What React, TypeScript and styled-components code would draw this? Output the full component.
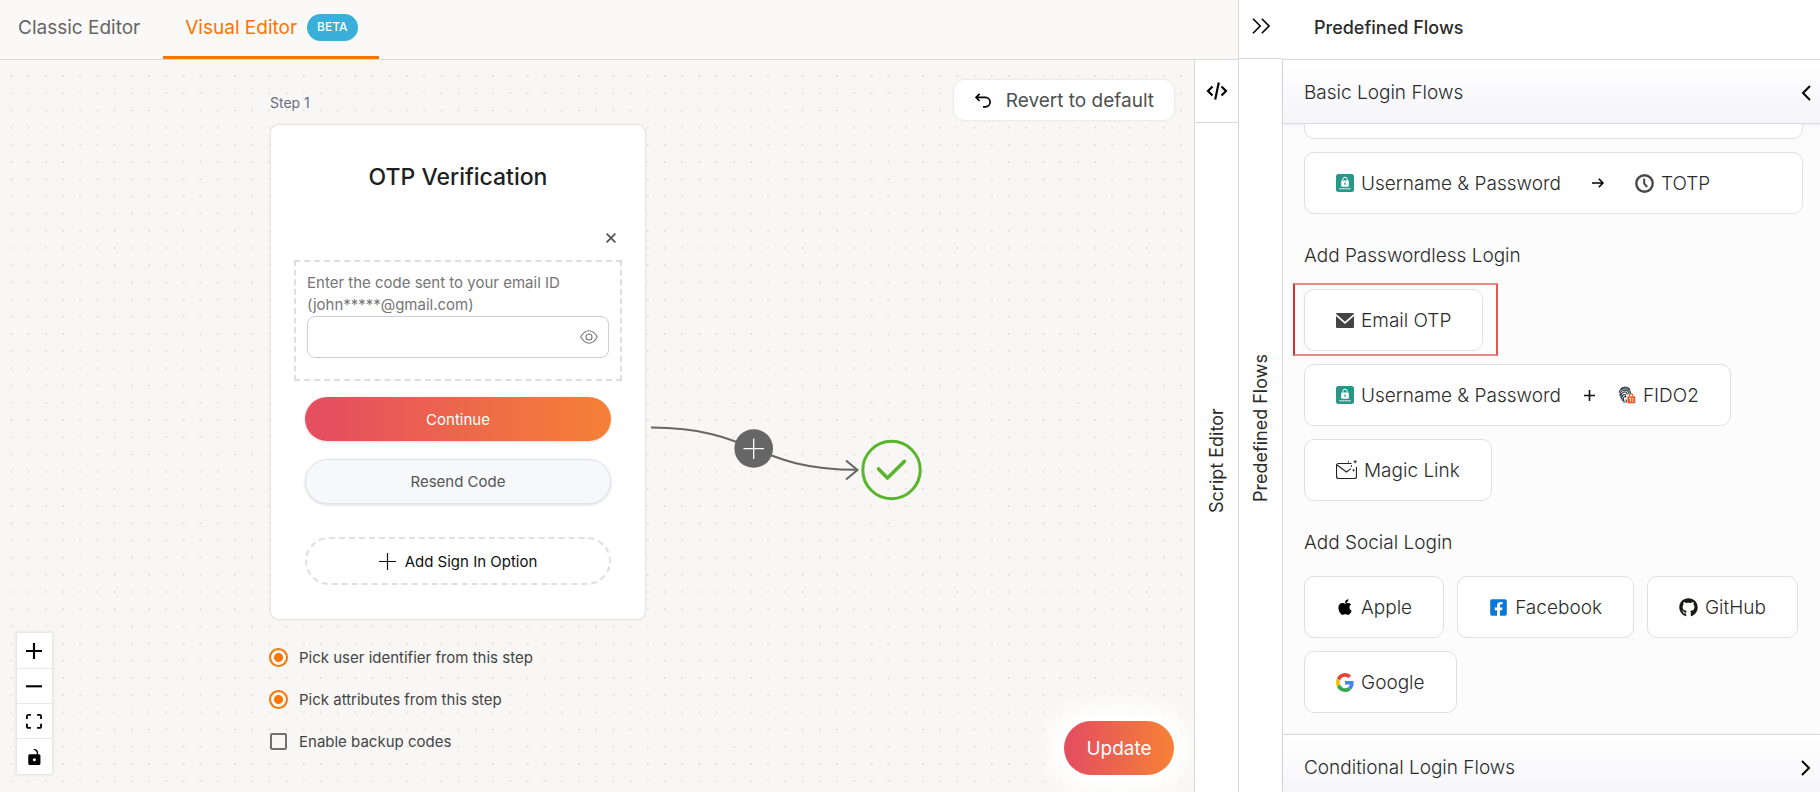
import React from "react";
import styled, { createGlobalStyle, css } from "styled-components";
import { FaApple, FaFacebookSquare, FaGithub } from "react-icons/fa";

const line = "#d9d9d9";
const orange = "#fa7400";
const brand = "linear-gradient(90deg, #e5505f 8%, #f57f37 96%)";

const GlobalStyle = createGlobalStyle`
  *, *::before, *::after { box-sizing: border-box; }
  body {
    margin: 0;
    font-family: Inter, "Liberation Sans", sans-serif;
    font-size: 19px;
    color: #2b2b2b;
    background: #fff;
  }
  button { font: inherit; color: inherit; cursor: pointer; }
  h1, h2, h3 { margin: 0; font-weight: 400; font-size: inherit; }
  svg { display: block; flex: none; }
`;

const Page = styled.div`
  display: grid;
  grid-template-columns: minmax(0, 1fr) 44px minmax(0, 538px);
  height: 100vh;
  min-height: 780px;
  overflow: hidden;
`;

const Editor = styled.main`
  display: flex;
  flex-direction: column;
  min-width: 0;
`;

const Tabs = styled.nav`
  display: flex;
  height: 60px;
  background: #faf9f7;
  border-bottom: 1px solid ${line};
`;

const Tab = styled.a<{ $active?: boolean }>`
  display: flex;
  align-items: center;
  gap: 10px;
  padding: 0 23px 2px 18px;
  font-weight: 400;
  text-decoration: none;
  color: #666;
  border-bottom: 3px solid transparent;
  ${(p) =>
    p.$active &&
    css`
      padding: 0 21px 2px 22px;
      color: ${orange};
      border-bottom-color: ${orange};
    `}
`;

const Badge = styled.span`
  padding: 0 10px 2px;
  border-radius: 14px;
  background: #3aafda;
  color: #fff;
  font-size: 12px;
  font-weight: 500;
  line-height: 25px;
`;

const Workspace = styled.div`
  display: flex;
  flex: 1;
  min-height: 0;
`;

const Canvas = styled.section`
  position: relative;
  flex: 1;
  min-width: 0;
  overflow: hidden;
  background: #f8f7f5;
`;

const Dots = styled.svg`
  position: absolute;
  inset: 0;
  width: 100%;
  height: 100%;
`;

const StepNode = styled.div`
  position: absolute;
  left: 270px;
  top: 31px;
  width: 376px;
`;

const StepName = styled.h2`
  font-size: 14px;
  line-height: 24px;
  color: #6c6c80;
  margin-bottom: 9px;
`;

const Card = styled.div`
  display: flex;
  flex-direction: column;
  height: 496px;
  padding: 36px 23px 34px;
  background: #fff;
  border: 1px solid #e4e4e4;
  border-radius: 9px;
  box-shadow: 0 0 2px #e8e8e8;
`;

const CardTitle = styled.h3`
  font-size: 23px;
  font-weight: 500;
  line-height: 32px;
  text-align: center;
  color: #1f1f1f;
`;

const Close = styled.button`
  align-self: flex-end;
  display: grid;
  place-items: center;
  width: 20px;
  height: 20px;
  margin: 35px 1px 12px 0;
  padding: 0;
  border: 0;
  background: none;
`;

const Field = styled.div`
  height: 122px;
  padding: 10px 11px;
  border: 2px dashed #dedede;
  font-size: 15px;
  line-height: 22px;
  color: #757575;
`;

const FieldLabel = styled.label`
  display: block;
`;

const InputBox = styled.div`
  display: flex;
  align-items: center;
  height: 42px;
  padding-right: 10px;
  border: 1px solid #cfcfcf;
  border-radius: 8px;
`;

const Input = styled.input`
  flex: 1;
  min-width: 0;
  height: 100%;
  padding: 0 12px;
  border: 0;
  outline: 0;
  background: none;
  font: inherit;
`;

const IconButton = styled.button`
  display: grid;
  place-items: center;
  padding: 0;
  border: 0;
  background: none;
`;

const Actions = styled.div`
  display: flex;
  flex-direction: column;
  gap: 18px;
  padding: 16px 11px 0;
`;

const Pill = styled.button<{ $kind: "primary" | "soft" | "dashed" }>`
  display: flex;
  align-items: center;
  justify-content: center;
  gap: 9px;
  height: 45px;
  border: 0;
  border-radius: 24px;
  font-size: 15px;
  box-shadow: 0 1px 3px rgba(0, 0, 0, 0.15);
  ${(p) =>
    p.$kind === "primary" &&
    css`
      height: 44px;
      background: ${brand};
      color: #fff;
    `}
  ${(p) =>
    p.$kind === "soft" &&
    css`
      background: #f6f8fc;
      border: 1px solid #e2e3e8;
      color: #555;
    `}
  ${(p) =>
    p.$kind === "dashed" &&
    css`
      height: 48px;
      margin-top: 15px;
      background: #fff;
      border: 2px dashed #e0e0e0;
      box-shadow: none;
      color: #111;
    `}
`;

const Options = styled.div`
  display: flex;
  flex-direction: column;
  gap: 18px;
  margin-top: 25px;
`;

const Option = styled.label`
  display: flex;
  align-items: center;
  gap: 11px;
  height: 24px;
  font-size: 15px;
  color: #444;
`;

const Radio = styled.input.attrs({ type: "radio" })`
  appearance: none;
  width: 19px;
  height: 19px;
  margin: 0 0 0 -1px;
  border: 2px solid ${orange};
  border-radius: 50%;
  background: radial-gradient(circle, ${orange} 4px, transparent 5px);
`;

const Check = styled.input.attrs({ type: "checkbox" })`
  appearance: none;
  width: 17px;
  height: 17px;
  margin: 0 1px 0 0;
  border: 2px solid #707070;
  border-radius: 2px;
`;

const Edge = styled.svg`
  position: absolute;
  left: 640px;
  top: 340px;
`;

const Controls = styled.div`
  position: absolute;
  left: 17px;
  bottom: 18px;
  width: 35px;
  box-shadow: 0 0 3px 1px rgba(0, 0, 0, 0.1);
`;

const Control = styled.button`
  display: grid;
  place-items: center;
  width: 35px;
  height: 35px;
  padding: 0 1px 0 0;
  border: 0;
  background: #fff;
  & + & {
    border-top: 1px solid #e8e8e8;
  }
  &:last-child {
    height: 36px;
  }
`;

const Revert = styled.button`
  position: absolute;
  top: 20px;
  right: 20px;
  display: flex;
  align-items: center;
  gap: 15px;
  height: 40px;
  padding: 0 20px 0 21px;
  border: 0;
  border-radius: 10px;
  background: #fff;
  color: #505050;
  box-shadow: 0 0 3px rgba(0, 0, 0, 0.12);
`;

const Update = styled.button`
  position: absolute;
  right: 20px;
  bottom: 17px;
  height: 54px;
  width: 110px;
  border: 0;
  border-radius: 27px;
  background: ${brand};
  color: #fff;
  box-shadow: 0 0 20px 16px #fff;
`;

const Rail = styled.aside`
  display: flex;
  flex-direction: column;
  flex: none;
  width: 44px;
  background: #fff;
  border-left: 1px solid ${line};
`;

const RailToggle = styled.button<{ $height: number; $lift?: number }>`
  display: grid;
  place-items: center;
  flex: none;
  height: ${(p) => p.$height}px;
  padding: 0 0 ${(p) => p.$lift ?? 0}px;
  border: 0;
  border-bottom: 1px solid ${line};
  background: none;
`;

const RailLabel = styled.span`
  flex: 1;
  display: flex;
  align-items: center;
  justify-content: center;
  padding-bottom: 6px;
  writing-mode: vertical-rl;
  transform: rotate(180deg);
  font-size: 18px;
`;

const Flows = styled.aside`
  display: flex;
  flex-direction: column;
  min-width: 0;
  min-height: 0;
`;

const FlowsTitle = styled.h2`
  flex: none;
  height: 59px;
  padding: 0 32px;
  font-size: 18px;
  line-height: 55px;
  font-weight: 500;
`;

const Accordion = styled.div`
  display: flex;
  flex-direction: column;
  flex: 1;
  min-height: 0;
  margin-bottom: -7px;
  border-left: 1px solid ${line};
  background: #fcfcfc;
`;

const SectionHeader = styled.button`
  display: flex;
  flex: none;
  align-items: center;
  justify-content: space-between;
  height: 65px;
  padding: 2px 9px 0 21px;
  border: 0;
  border-top: 1px solid ${line};
  border-bottom: 1px solid #dcdce6;
  background: linear-gradient(#fff, #f5f5f9);
  box-shadow: 0 1px 3px rgba(0, 0, 0, 0.08);
  font-weight: 300;
  text-align: left;
`;

const SectionBody = styled.div`
  display: flex;
  flex-direction: column;
  justify-content: flex-end;
  flex: 1;
  min-height: 0;
  overflow: hidden;
  padding: 0 17px 21px 21px;
`;

const GroupTitle = styled.h3`
  margin: 29px 0 21px;
  line-height: 25px;
  font-weight: 300;
`;

const Row = styled.div`
  display: flex;
  flex-wrap: wrap;
  gap: 13px;
`;

const Stack = styled.div`
  display: flex;
  flex-direction: column;
  align-items: flex-start;
  gap: 13px;
`;

const Flow = styled.button<{ $wide?: boolean; $marked?: boolean }>`
  position: relative;
  display: flex;
  flex: none;
  align-items: center;
  height: 62px;
  padding: 0 31px;
  border: 1px solid #e0e0e0;
  border-radius: 10px;
  background: #fff;
  font-weight: 300;
  ${(p) => p.$wide && "align-self: stretch;"}
  ${(p) =>
    p.$marked &&
    css`
      &::after {
        content: "";
        position: absolute;
        inset: -7px -16px -6px -12px;
        border: 2px solid #e58a84;
        border-left-color: #cf342b;
        border-right-color: #dc5a50;
      }
    `}
`;

const Method = styled.span`
  display: flex;
  align-items: center;
  gap: 7px;
  white-space: nowrap;
`;

const Joint = styled.span<{ $space: number }>`
  margin: 0 ${(p) => p.$space}px;
`;

const LockIcon = () => (
  <svg width="18" height="18" viewBox="0 0 18 18">
    <rect width="18" height="18" rx="2.5" fill="#2a9688" />
    <path d="M6.8 6.8V5.4a2.200 2.200 0 0 1 4.400 0v1.4" fill="none" stroke="#fff" strokeWidth="1" />
    <rect x="5.200" y="6.600" width="7.600" height="6.200" rx="0.8" fill="#fff" />
    <path d="M9 8.400v2.400" stroke="#2a9688" strokeWidth="1.300" />
    <path d="M3.400 14.800h11.200" stroke="#fff" strokeWidth="1" strokeDasharray="2.400 .5" />
  </svg>
);

const ClockIcon = () => (
  <svg width="19" height="19" viewBox="0 0 19 19" fill="none" stroke="#484848">
    <circle cx="9.500" cy="9.500" r="8.200" strokeWidth="2.400" />
    <path d="M9.200 4.400v5.200l3 3.400" strokeWidth="2" />
  </svg>
);

const MailIcon = () => (
  <svg width="18" height="15" viewBox="0 0 18 15">
    <rect width="18" height="15" rx="1" fill="#444" />
    <path d="M0 1.800l9 8 9-8" fill="none" stroke="#fff" strokeWidth="1.700" />
  </svg>
);

const FidoIcon = () => (
  <svg width="18" height="18" viewBox="0 0 18 18" fill="none">
    <path
      d="M2.200 3.800C4.600.4 9.600.2 12 3.600M.8 6.600C2.400 2 11.600.6 12.800 7.600M2 9.800C1.400 3.200 11 2.200 11.200 8.200M3.200 12.400c-1.600-6.600 5.600-8.600 6.200-3.800M4.600 14.800C2.200 9 7 6.800 7.600 9.800v2M6.400 16.800c-1.400-3-1.400-5 .2-6.600M8.200 16.400v-3"
      stroke="#33404a"
      strokeWidth="1.200"
    />
    <path d="M11.400 10.600v-1a1.700 1.700 0 0 1 3.400 0v1" stroke="#f4581c" strokeWidth="1.200" />
    <rect x="9.400" y="10.300" width="7.800" height="7" fill="#f4581c" />
    <path d="M11.400 12h1.200v3.600M14.800 12v1.600M14.800 14.400v1.400" stroke="#fff" />
  </svg>
);

const MagicIcon = () => (
  <svg width="21" height="20" viewBox="0 0 21 20" fill="none" stroke="#222">
    <path d="M15.500 3.500H2.500a2 2 0 0 0-2 2v11a2 2 0 0 0 2 2h16a2 2 0 0 0 2-2V7" strokeWidth="1.200" />
    <path d="M1 5l9.500 7 4.500-3.400" strokeWidth="1.100" />
    <path d="M19.200 0v3.400M17.500 1.700h3.400M17.600 9.200v2.200M16.500 10.300h2.200M12.400 1v1.600M15.400 5v2" strokeWidth=".9" />
  </svg>
);

const GoogleIcon = () => (
  <svg width="18" height="19" viewBox="0 0 48 48" preserveAspectRatio="none">
    <path fill="#EA4335" d="M24 9.5c3.54 0 6.71 1.22 9.21 3.6l6.85-6.85C35.9 2.38 30.47 0 24 0 14.62 0 6.51 5.38 2.56 13.22l7.98 6.19C12.43 13.72 17.74 9.5 24 9.5z" />
    <path fill="#4285F4" d="M46.98 24.55c0-1.57-.15-3.09-.38-4.55H24v9.02h12.94c-.58 2.96-2.26 5.48-4.78 7.18l7.73 6c4.51-4.18 7.09-10.36 7.09-17.65z" />
    <path fill="#FBBC05" d="M10.53 28.59c-.48-1.45-.76-2.99-.76-4.59s.27-3.14.76-4.59l-7.98-6.19C.92 16.46 0 20.12 0 24c0 3.88.92 7.54 2.56 10.78l7.97-6.19z" />
    <path fill="#34A853" d="M24 48c6.48 0 11.93-2.13 15.89-5.81l-7.73-6c-2.15 1.45-4.92 2.3-8.16 2.3-6.26 0-11.57-4.22-13.47-9.91l-7.98 6.19C6.51 42.62 14.62 48 24 48z" />
  </svg>
);

const ArrowIcon = () => (
  <svg width="12" height="10" viewBox="0 0 12 10" fill="none" stroke="#000" strokeWidth="1.600">
    <path d="M0 5h11M6.800 .8L11 5 6.800 9.200" strokeLinejoin="round" />
  </svg>
);

const PlusIcon = ({ size, width }: { size: number; width: number }) => (
  <svg width={size} height={size} viewBox={`0 0 ${size} ${size}`} stroke="#111" strokeWidth={width}>
    <path d={`M${size / 2} 0v${size}M0 ${size / 2}h${size}`} />
  </svg>
);

const Chevron = ({ dir }: { dir: "left" | "right" }) => (
  <svg width="10" height="16" viewBox="0 0 10 16" fill="none" stroke="#000" strokeWidth="2">
    <path d={dir === "left" ? "M9 1L2 8l7 7" : "M1 1l7 7-7 7"} />
  </svg>
);

const UserPassword = () => (
  <Method>
    <LockIcon />
    Username &amp; Password
  </Method>
);

export default function App() {
  return (
    <>
      <GlobalStyle />
      <Page>
        <Editor>
          <Tabs>
            <Tab href="#classic">Classic Editor</Tab>
            <Tab href="#visual" $active>
              Visual Editor <Badge>BETA</Badge>
            </Tab>
          </Tabs>
          <Workspace>
            <Canvas>
              <Dots aria-hidden="true">
                <defs>
                  <pattern id="dots" x="2.8" y="7.4" width="17.2" height="17.2" patternUnits="userSpaceOnUse">
                    <circle cx="8.6" cy="8.6" r="1" fill="#dededc" />
                  </pattern>
                </defs>
                <rect width="100%" height="100%" fill="url(#dots)" />
              </Dots>

              <StepNode>
                <StepName>Step 1</StepName>
                <Card>
                  <CardTitle>OTP Verification</CardTitle>
                  <Close aria-label="Remove">
                    <svg width="10" height="10" viewBox="0 0 10 10" stroke="#555" strokeWidth="1.8">
                      <path d="M.6 .6l8.800 8.800M9.400 .6L.6 9.400" />
                    </svg>
                  </Close>
                  <Field>
                    <FieldLabel htmlFor="code">
                      Enter the code sent to your email ID (john*****@gmail.com)
                    </FieldLabel>
                    <InputBox>
                      <Input id="code" />
                      <IconButton aria-label="Show code">
                        <svg width="18" height="14" viewBox="0 0 18 14" fill="none" stroke="#777" strokeWidth="1.1">
                          <path d="M.7 7C3.2 2.800 6 .8 9 .8S14.800 2.800 17.300 7C14.800 11.200 12 13.200 9 13.200S3.200 11.200 .7 7z" />
                          <circle cx="9" cy="7" r="3" />
                        </svg>
                      </IconButton>
                    </InputBox>
                  </Field>
                  <Actions>
                    <Pill $kind="primary">Continue</Pill>
                    <Pill $kind="soft">Resend Code</Pill>
                    <Pill $kind="dashed">
                      <PlusIcon size={17} width={1.2} />
                      Add Sign In Option
                    </Pill>
                  </Actions>
                </Card>
                <Options>
                  <Option>
                    <Radio name="identifier" defaultChecked />
                    Pick user identifier from this step
                  </Option>
                  <Option>
                    <Radio name="attributes" defaultChecked />
                    Pick attributes from this step
                  </Option>
                  <Option>
                    <Check />
                    Enable backup codes
                  </Option>
                </Options>
              </StepNode>

              <Edge width="290" height="110" viewBox="0 0 290 110" fill="none">
                <path d="M11 27.600C114 27.600 114 69.800 217 69.800" stroke="#666" strokeWidth="2" />
                <path d="M206 60.500L217.500 70 206 79.500" stroke="#666" strokeWidth="2" />
                <circle cx="113.700" cy="48.500" r="19.300" fill="#666" />
                <path d="M113.700 38.500v20.500M103.500 48.700H124" stroke="#fff" strokeWidth="1.300" />
                <circle cx="251.500" cy="70" r="28.700" stroke="#58b52c" strokeWidth="3" />
                <path d="M238.500 69l9 9L264.500 61.300" stroke="#58b52c" strokeWidth="3.600" strokeLinecap="round" strokeLinejoin="round" />
              </Edge>

              <Revert>
                <svg width="16" height="15" viewBox="0 0 16 15" fill="none" stroke="#000" strokeWidth="1.700">
                  <path d="M4.600 .8L1 4.400 4.600 8M1 4.400h9.400a4.700 4.700 0 0 1 0 9.400H8" />
                </svg>
                Revert to default
              </Revert>

              <Controls>
                <Control aria-label="Zoom in">
                  <svg width="16" height="16" viewBox="0 0 32 32">
                    <path d="M32 18.133H18.133V32h-4.266V18.133H0v-4.266h13.867V0h4.266v13.867H32z" />
                  </svg>
                </Control>
                <Control aria-label="Zoom out">
                  <svg width="16" height="3" viewBox="0 0 32 5">
                    <path d="M0 0h32v4.200H0z" />
                  </svg>
                </Control>
                <Control aria-label="Fit view">
                  <svg width="16" height="15" viewBox="0 0 32 30">
                    <path d="M3.692 4.630c0-.53.4-.938.939-.938h5.215V0H4.708C2.130 0 0 2.054 0 4.630v5.216h3.692V4.631zM27.354 0h-5.200v3.692h5.170c.53 0 .984.4.984.939v5.215H32V4.631A4.624 4.624 0 0027.354 0zm.954 24.830c0 .532-.4.940-.939.940h-5.215v3.768h5.215c2.577 0 4.631-2.130 4.631-4.707v-5.139h-3.692v5.139zm-23.677.940c-.531 0-.939-.4-.939-.940v-5.138H0v5.139c0 2.577 2.130 4.707 4.708 4.707h5.138V25.770H4.631z" />
                  </svg>
                </Control>
                <Control aria-label="Toggle interactivity">
                  <svg width="13" height="16" viewBox="0 0 25 32">
                    <path d="M21.333 10.667H19.810V7.619C19.810 3.429 16.380 0 12.190 0c-4.114 1.828-1.370 2.133.305 2.438 1.676.305 4.420 2.590 4.420 5.181v3.048H3.047A3.056 3.056 0 000 13.714v15.238A3.056 3.056 0 003.048 32h18.285a3.056 3.056 0 003.048-3.048V13.714a3.056 3.056 0 00-3.048-3.047zM12.190 24.533a3.056 3.056 0 01-3.047-3.047 3.056 3.056 0 013.047-3.048 3.056 3.056 0 013.048 3.048 3.056 3.056 0 01-3.048 3.047z" />
                  </svg>
                </Control>
              </Controls>

              <Update>Update</Update>
            </Canvas>

            <Rail>
              <RailToggle $height={63} aria-label="Open script editor">
                <svg width="22" height="18" viewBox="0 0 22 18" fill="none" stroke="#000" strokeWidth="2.200">
                  <path d="M6.500 4.500L2 9l4.500 4.500M15.500 4.500L20 9l-4.500 4.500M12.800 .6L9.200 17.400" />
                </svg>
              </RailToggle>
              <RailLabel>Script Editor</RailLabel>
            </Rail>
          </Workspace>
        </Editor>

        <Rail>
          <RailToggle $height={59} $lift={6} aria-label="Collapse predefined flows">
            <svg width="18" height="16" viewBox="0 0 18 16" fill="none" stroke="#000" strokeWidth="1.600">
              <path d="M1 .8L8.200 8 1 15.200M9.800 .8L17 8l-7.200 7.200" />
            </svg>
          </RailToggle>
          <RailLabel>Predefined Flows</RailLabel>
        </Rail>

        <Flows>
          <FlowsTitle>Predefined Flows</FlowsTitle>
          <Accordion>
            <SectionHeader>
              Basic Login Flows
              <Chevron dir="left" />
            </SectionHeader>
            <SectionBody>
              <Stack>
                <Flow $wide aria-label="Previous flow" />
                <Flow $wide>
                  <UserPassword />
                  <Joint $space={31}>
                    <ArrowIcon />
                  </Joint>
                  <Method>
                    <ClockIcon />
                    TOTP
                  </Method>
                </Flow>
              </Stack>
              <GroupTitle>Add Passwordless Login</GroupTitle>
              <Stack>
                <Flow $marked>
                  <Method>
                    <MailIcon />
                    Email OTP
                  </Method>
                </Flow>
                <Flow>
                  <UserPassword />
                  <Joint $space={23}>
                    <PlusIcon size={11} width={1.6} />
                  </Joint>
                  <Method>
                    <FidoIcon />
                    FIDO2
                  </Method>
                </Flow>
                <Flow>
                  <Method>
                    <MagicIcon />
                    Magic Link
                  </Method>
                </Flow>
              </Stack>
              <GroupTitle>Add Social Login</GroupTitle>
              <Row>
                <Flow>
                  <Method>
                    <FaApple size={18} color="#000" />
                    Apple
                  </Method>
                </Flow>
                <Flow>
                  <Method>
                    <FaFacebookSquare size={19} color="#0a78d6" />
                    Facebook
                  </Method>
                </Flow>
                <Flow>
                  <Method>
                    <FaGithub size={19} color="#1b1817" />
                    GitHub
                  </Method>
                </Flow>
                <Flow>
                  <Method>
                    <GoogleIcon />
                    Google
                  </Method>
                </Flow>
              </Row>
            </SectionBody>
            <SectionHeader>
              Conditional Login Flows
              <Chevron dir="right" />
            </SectionHeader>
          </Accordion>
        </Flows>
      </Page>
    </>
  );
}
